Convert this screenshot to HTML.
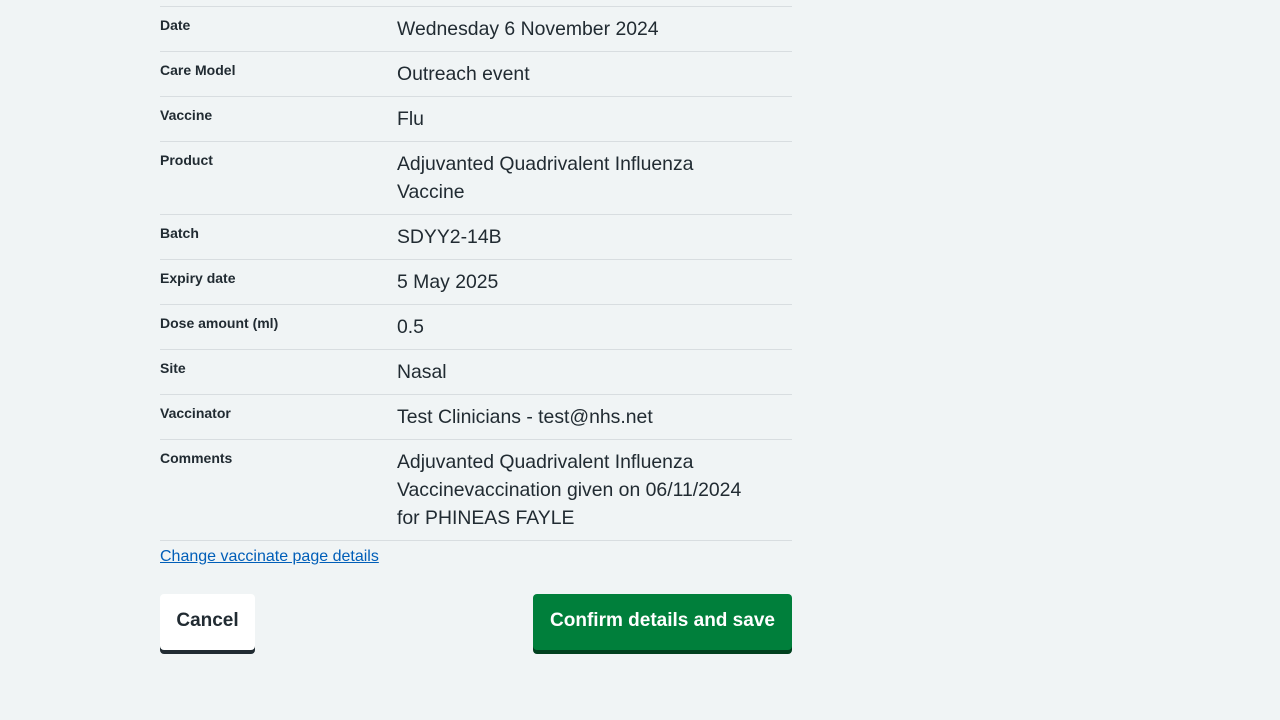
<!DOCTYPE html>
<html><head><meta charset="utf-8"><style>
body{margin:0;background:#f0f4f5;font-family:"Liberation Sans",sans-serif;color:#212b32;width:1280px;height:720px;overflow:hidden;position:relative}
.list{position:absolute;left:160px;top:6px;width:632px}
.row{display:flex;border-top:1px solid #d8dde0}
.k{width:237px;font-weight:bold;font-size:14px;line-height:20px;padding-top:8px}
.v{width:390px;font-size:19.4px;line-height:28px;padding:8px 0}
.last{border-top:1px solid #d8dde0}
a{position:absolute;left:160px;top:548px;font-size:16px;color:#005eb8;text-decoration:underline}
.btn{position:absolute;top:594px;height:56px;border-radius:4px;font-weight:bold;font-size:19px;line-height:54px;text-align:center;box-sizing:border-box}
.c{left:160px;width:95px;background:#fff;box-shadow:0 4px 0 #212b32}
.g{left:533px;width:259px;background:#007f3b;color:#fff;box-shadow:0 4px 0 #00401e}
</style></head><body>
<div class="list">
<div class="row"><div class="k">Date</div><div class="v">Wednesday 6 November 2024</div></div>
<div class="row"><div class="k">Care Model</div><div class="v">Outreach event</div></div>
<div class="row"><div class="k">Vaccine</div><div class="v">Flu</div></div>
<div class="row"><div class="k">Product</div><div class="v">Adjuvanted Quadrivalent Influenza<br>Vaccine</div></div>
<div class="row"><div class="k">Batch</div><div class="v">SDYY2-14B</div></div>
<div class="row"><div class="k">Expiry date</div><div class="v">5 May 2025</div></div>
<div class="row"><div class="k">Dose amount (ml)</div><div class="v">0.5</div></div>
<div class="row"><div class="k">Site</div><div class="v">Nasal</div></div>
<div class="row"><div class="k">Vaccinator</div><div class="v">Test Clinicians - test@nhs.net</div></div>
<div class="row"><div class="k">Comments</div><div class="v">Adjuvanted Quadrivalent Influenza<br>Vaccinevaccination given on 06/11/2024<br>for PHINEAS FAYLE</div></div>
<div class="last"></div>
</div>
<a href="#">Change vaccinate page details</a>
<div class="btn c">Cancel</div>
<div class="btn g">Confirm details and save</div>
</body></html>
